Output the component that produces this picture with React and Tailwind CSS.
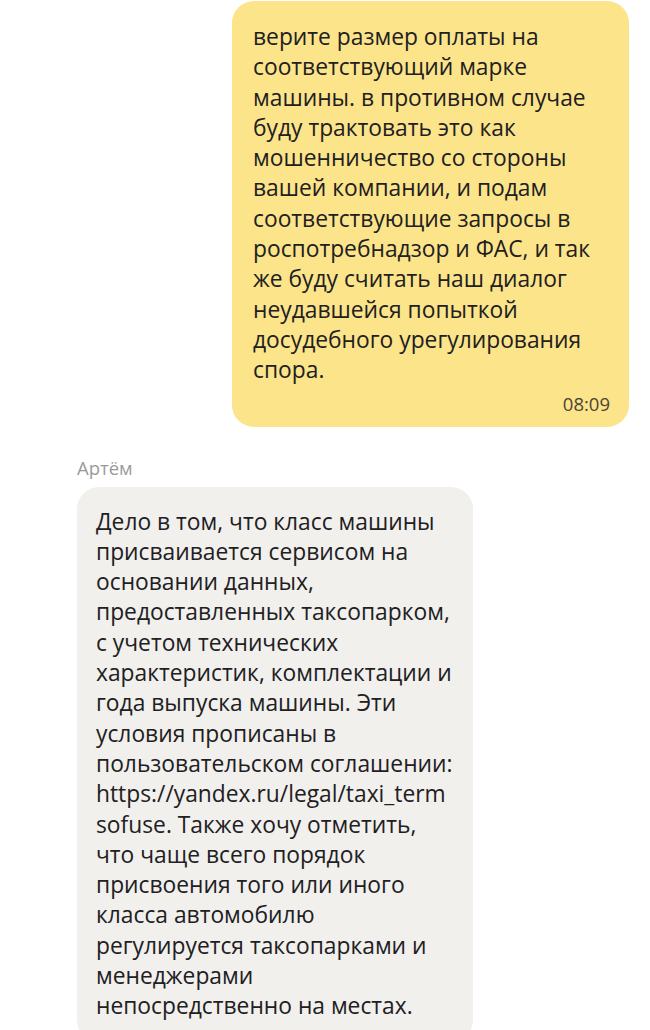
import React from "react";

const mine = [
    "верите размер оплаты на",
    "соответствующий марке",
    "машины. в противном случае",
    "буду трактовать это как",
    "мошенничество со стороны",
    "вашей компании, и подам",
    "соответствующие запросы в",
    "роспотребнадзор и ФАС, и так",
    "же буду считать наш диалог",
    "неудавшейся попыткой",
    "досудебного урегулирования",
    "спора.",
];

const reply = [
    "Дело в том, что класс машины",
    "присваивается сервисом на",
    "основании данных,",
    "предоставленных таксопарком,",
    "с учетом технических",
    "характеристик, комплектации и",
    "года выпуска машины. Эти",
    "условия прописаны в",
    "пользовательском соглашении:",
    "https://yandex.ru/legal/taxi_term",
    "sofuse. Также хочу отметить,",
    "что чаще всего порядок",
    "присвоения того или иного",
    "класса автомобилю",
    "регулируется таксопарками и",
    "менеджерами",
    "непосредственно на местах.",
];

function Lines({ items }) {
    return (
        <div className="text-[22.8px] leading-[30.3px] text-[#21201f]">
            {items.map((line, i) => (
                <div key={i} className="whitespace-nowrap">
                    {line}
                </div>
            ))}
        </div>
    );
}

export default function App() {
    return (
        <div className="h-[1030px] w-[650px] overflow-hidden bg-white font-['Open_Sans',sans-serif]">
            <div className="flex justify-end pr-[21px] pt-[1px]">
                <div className="w-[397px] rounded-[22px] bg-[#fce48a] pl-[21px] pr-[19px] pt-[21px] pb-[13px]">
                    <Lines items={mine} />
                    <div className="mt-[8px] text-right text-[18.5px] leading-[20px] text-[#4a4535]">
                        08:09
                    </div>
                </div>
            </div>

            <div className="mt-[30px] pl-[77px]">
                <div className="text-[18.5px] leading-[22px] text-[#9a9a9a]">Артём</div>
                <div className="mt-[8px] w-[396px] rounded-[22px] bg-[#f1f0ed] pl-[19px] pr-[16px] pt-[20px] pb-[20px]">
                    <Lines items={reply} />
                </div>
            </div>
        </div>
    );
}
